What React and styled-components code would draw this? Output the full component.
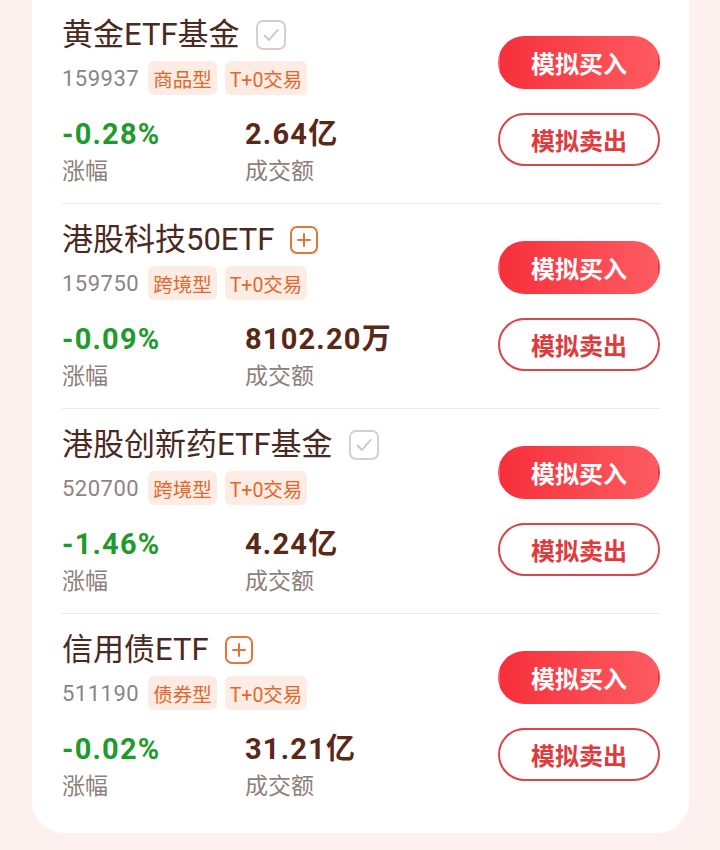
import React from "react";
import styled, { createGlobalStyle } from "styled-components";

const Global = createGlobalStyle`
  html, body { margin: 0; padding: 0; background: #fdf1f0; }
  body { font-family: Roboto, "Noto Sans CJK SC", sans-serif; }
`;

const Page = styled.div`
  width: 720px;
  height: 850px;
  overflow: hidden;
  background: #fdf1f0;
`;

const Card = styled.div`
  margin: -1px 31px 0 32px;
  background: #ffffff;
  border-radius: 0 0 32px 32px;
  padding: 0 29px 14px 30px;
`;

const Row = styled.div`
  display: flex;
  justify-content: space-between;
  align-items: center;
  padding: 16px 0 16px;
  border-bottom: 1px solid ${(p) => (p.$last ? "transparent" : "#ece8e8")};
`;

const Info = styled.div`
  display: flex;
  flex-direction: column;
`;

const TitleLine = styled.div`
  display: flex;
  align-items: center;
  height: 40px;
  gap: 16px;
`;

const Title = styled.span`
  font-size: 31px;
  color: #4a2a1f;
  line-height: 40px;
`;

const IconBox = styled.span`
  display: inline-flex;
  align-items: center;
  justify-content: center;
  box-sizing: border-box;
  width: ${(p) => (p.$added ? 30 : 28)}px;
  height: ${(p) => (p.$added ? 30 : 28)}px;
  border: 2px solid ${(p) => (p.$added ? "#d3d0cf" : "#e0773a")};
  border-radius: 7px;
`;

const CodeLine = styled.div`
  display: flex;
  align-items: center;
  margin-top: 6px;
  height: 34px;
`;

const Code = styled.span`
  font-size: 22px;
  letter-spacing: 0.5px;
  color: #8b8482;
  margin-right: 9px;
`;

const Tag = styled.span`
  display: inline-flex;
  align-items: center;
  height: 34px;
  padding: 0 5px;
  margin-right: 8px;
  border-radius: 6px;
  background: #fdece4;
  color: #e0682c;
  font-size: 19.5px;
`;

const Stats = styled.div`
  display: grid;
  grid-template-columns: 183px auto;
  margin-top: 22px;
`;

const Stat = styled.div`
  display: flex;
  flex-direction: column;
`;

const Value = styled.span`
  font-size: 29px;
  font-weight: 700;
  line-height: 34px;
  letter-spacing: 1.2px;
  color: ${(p) => (p.$green ? "#1f9a2c" : "#5a2816")};
`;

const Label = styled.span`
  margin-top: 6px;
  font-size: 23px;
  line-height: 30px;
  color: #8d7f7a;
`;

const Actions = styled.div`
  display: flex;
  flex-direction: column;
  gap: 24px;
`;

const Btn = styled.button`
  box-sizing: border-box;
  width: 162px;
  height: 53px;
  border-radius: 27px;
  font-family: "Noto Sans CJK SC", sans-serif;
  font-size: 24px;
  font-weight: 700;
  cursor: pointer;
  border: 2px solid ${(p) => (p.$primary ? "transparent" : "#d8464b")};
  background: ${(p) =>
    p.$primary ? "linear-gradient(90deg, #f6303b 0%, #fe5b62 100%)" : "#ffffff"};
  color: ${(p) => (p.$primary ? "#ffffff" : "#e03a3d")};
  padding: 0;
`;

const Check = () => (
  <svg width="20" height="20" viewBox="0 0 20 20" fill="none">
    <path d="M3.5 10.5l4.5 4.5 8.5-10" stroke="#c9c5c4" strokeWidth="1.8" strokeLinecap="round" strokeLinejoin="round" />
  </svg>
);

const Plus = () => (
  <svg width="16" height="16" viewBox="0 0 16 16" fill="none">
    <path d="M8 2v12M2 8h12" stroke="#e0773a" strokeWidth="2" strokeLinecap="round" />
  </svg>
);

const items = [
  { name: "黄金ETF基金", added: true, code: "159937", type: "商品型", change: "-0.28%", amount: "2.64亿" },
  { name: "港股科技50ETF", added: false, code: "159750", type: "跨境型", change: "-0.09%", amount: "8102.20万" },
  { name: "港股创新药ETF基金", added: true, code: "520700", type: "跨境型", change: "-1.46%", amount: "4.24亿" },
  { name: "信用债ETF", added: false, code: "511190", type: "债券型", change: "-0.02%", amount: "31.21亿" },
];

export default function App() {
  return (
    <Page>
      <Global />
      <Card>
        {items.map((it, i) => (
          <Row key={it.code} $last={i === items.length - 1}>
            <Info>
              <TitleLine>
                <Title>{it.name}</Title>
                <IconBox $added={it.added}>{it.added ? <Check /> : <Plus />}</IconBox>
              </TitleLine>
              <CodeLine>
                <Code>{it.code}</Code>
                <Tag>{it.type}</Tag>
                <Tag>T+0交易</Tag>
              </CodeLine>
              <Stats>
                <Stat>
                  <Value $green>{it.change}</Value>
                  <Label>涨幅</Label>
                </Stat>
                <Stat>
                  <Value>{it.amount}</Value>
                  <Label>成交额</Label>
                </Stat>
              </Stats>
            </Info>
            <Actions>
              <Btn $primary>模拟买入</Btn>
              <Btn>模拟卖出</Btn>
            </Actions>
          </Row>
        ))}
      </Card>
    </Page>
  );
}
